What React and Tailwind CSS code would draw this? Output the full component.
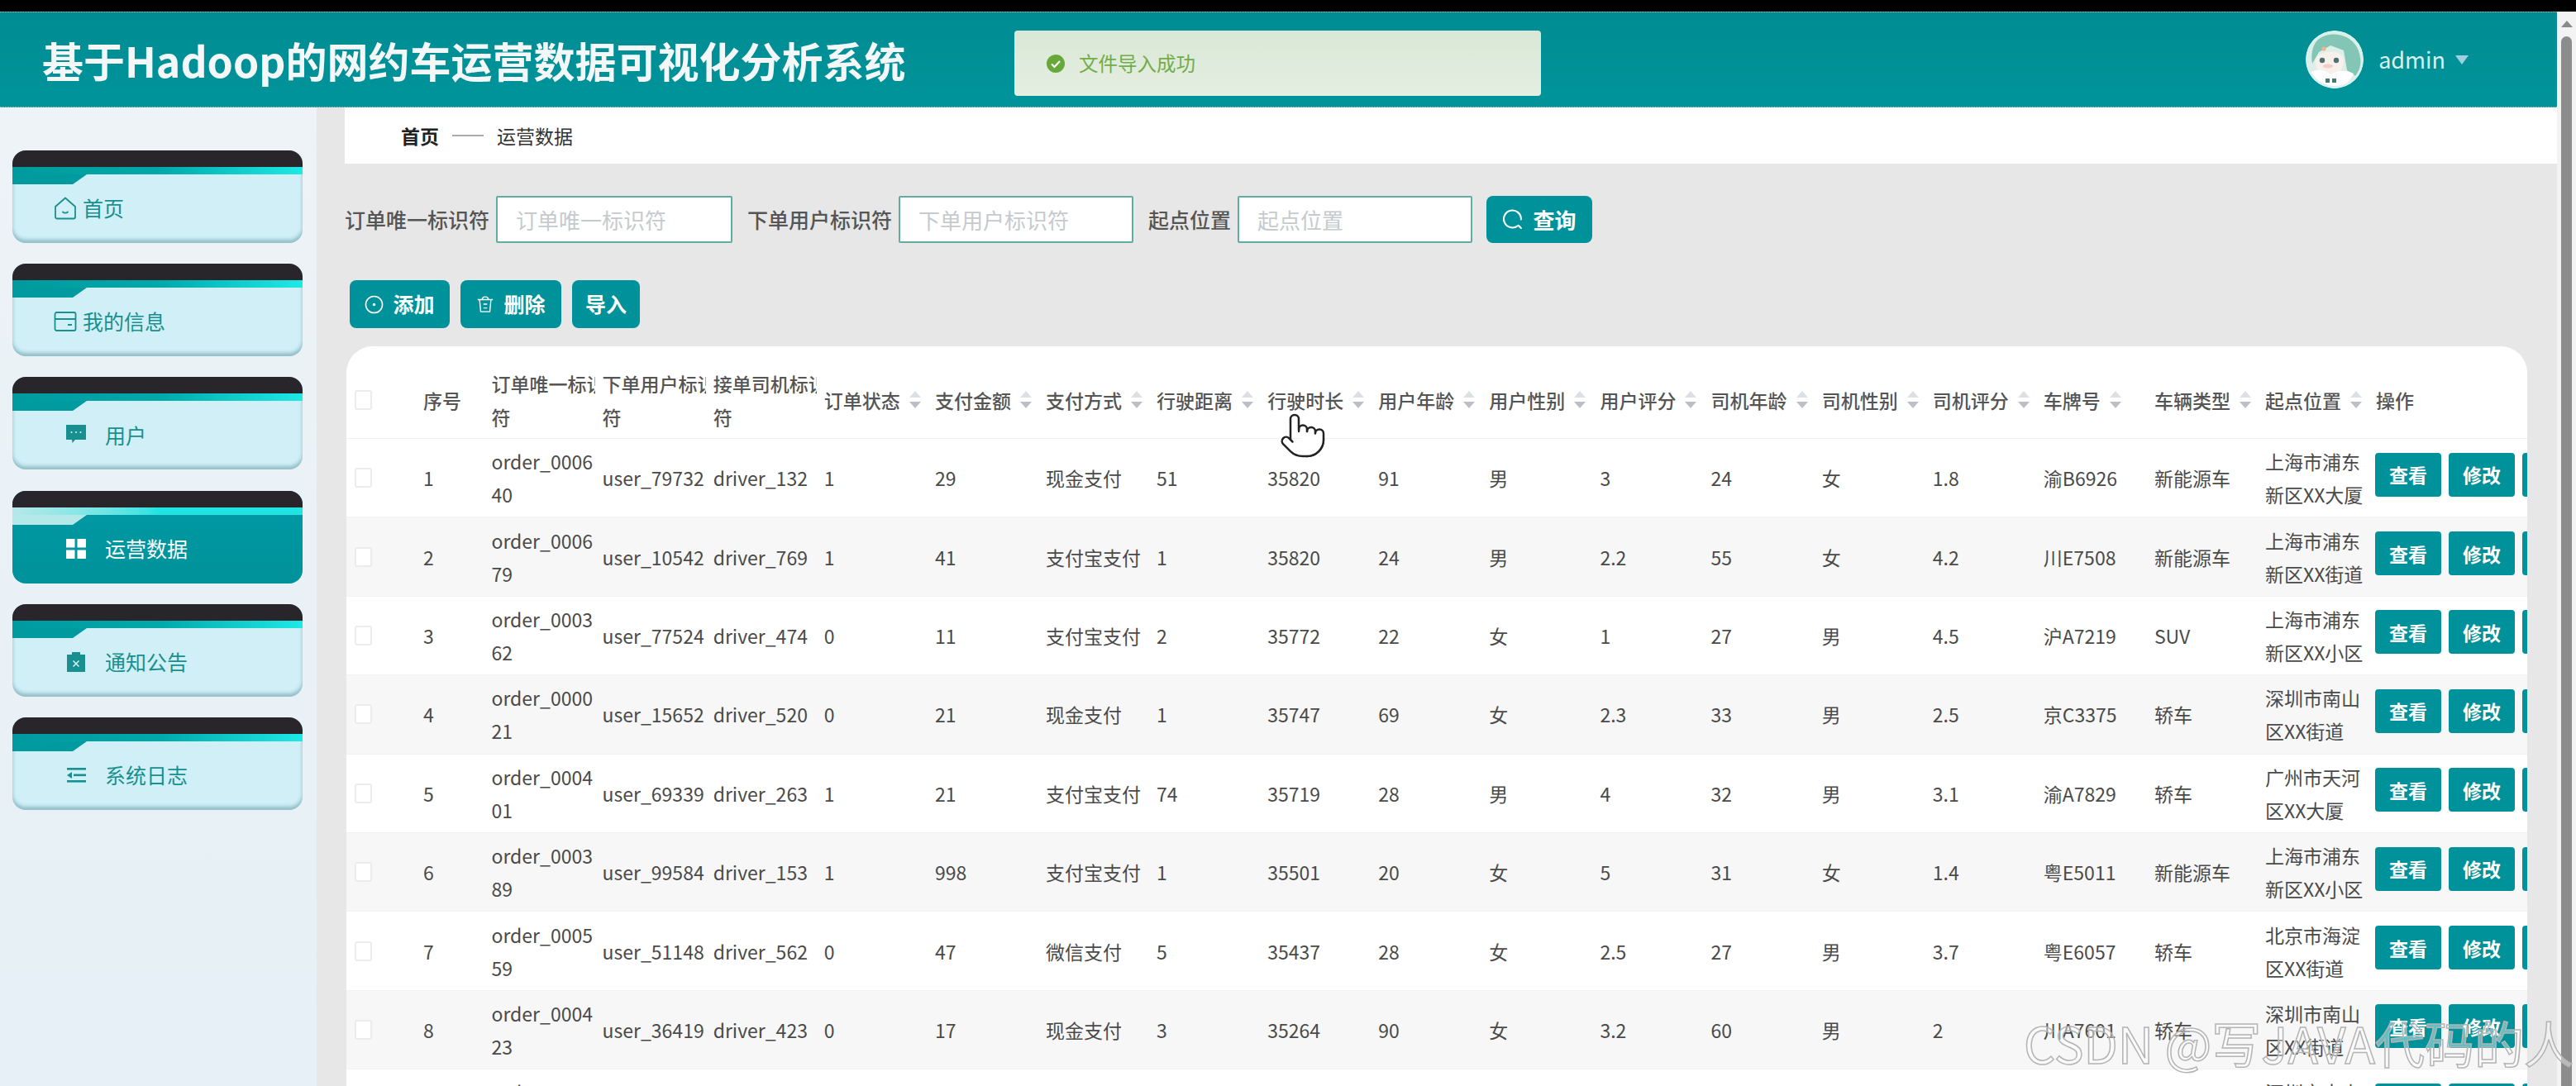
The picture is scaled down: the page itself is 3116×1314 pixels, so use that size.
import { Pointer } from 'lucide-react'

const rows = [
  [1, ['order_0006', '40'], 'user_79732', 'driver_132', 1, 29, '现金支付', 51, 35820, 91, '男', 3, 24, '女', 1.8, '渝B6926', '新能源车', ['上海市浦东', '新区XX大厦']],
  [2, ['order_0006', '79'], 'user_10542', 'driver_769', 1, 41, '支付宝支付', 1, 35820, 24, '男', 2.2, 55, '女', 4.2, '川E7508', '新能源车', ['上海市浦东', '新区XX街道']],
  [3, ['order_0003', '62'], 'user_77524', 'driver_474', 0, 11, '支付宝支付', 2, 35772, 22, '女', 1, 27, '男', 4.5, '沪A7219', 'SUV', ['上海市浦东', '新区XX小区']],
  [4, ['order_0000', '21'], 'user_15652', 'driver_520', 0, 21, '现金支付', 1, 35747, 69, '女', 2.3, 33, '男', 2.5, '京C3375', '轿车', ['深圳市南山', '区XX街道']],
  [5, ['order_0004', '01'], 'user_69339', 'driver_263', 1, 21, '支付宝支付', 74, 35719, 28, '男', 4, 32, '男', 3.1, '渝A7829', '轿车', ['广州市天河', '区XX大厦']],
  [6, ['order_0003', '89'], 'user_99584', 'driver_153', 1, 998, '支付宝支付', 1, 35501, 20, '女', 5, 31, '女', 1.4, '粤E5011', '新能源车', ['上海市浦东', '新区XX小区']],
  [7, ['order_0005', '59'], 'user_51148', 'driver_562', 0, 47, '微信支付', 5, 35437, 28, '女', 2.5, 27, '男', 3.7, '粤E6057', '轿车', ['北京市海淀', '区XX街道']],
  [8, ['order_0004', '23'], 'user_36419', 'driver_423', 0, 17, '现金支付', 3, 35264, 90, '女', 3.2, 60, '男', 2, '川A7601', '轿车', ['深圳市南山', '区XX街道']],
  [9, ['order_0003', '12'], 'user_40218', 'driver_377', 1, 36, '微信支付', 8, 35190, 41, '男', 3.6, 29, '女', 4.1, '京A3052', '轿车', ['深圳市南山', '区XX小区']],
]

const headers = [
  { lines: ['订单唯一标识', '符'] },
  { lines: ['下单用户标识', '符'] },
  { lines: ['接单司机标识', '符'] },
  { text: '订单状态', sort: true },
  { text: '支付金额', sort: true },
  { text: '支付方式', sort: true },
  { text: '行驶距离', sort: true },
  { text: '行驶时长', sort: true },
  { text: '用户年龄', sort: true },
  { text: '用户性别', sort: true },
  { text: '用户评分', sort: true },
  { text: '司机年龄', sort: true },
  { text: '司机性别', sort: true },
  { text: '司机评分', sort: true },
  { text: '车牌号', sort: true },
  { text: '车辆类型', sort: true },
  { text: '起点位置', sort: true },
]

const gridCols = 'grid grid-cols-[88px_82.5px_repeat(17,134.1px)_188px] items-center'

const HomeIcon = () => (
  <svg viewBox="0 0 28 28" className="w-[28px] h-[28px]" fill="none" stroke="currentColor" strokeWidth="1.8">
    <path d="M2 12 14 1.5 26 12v12.5a2 2 0 0 1-2 2H4a2 2 0 0 1-2-2z" strokeLinejoin="round" />
    <path d="M11 18.5c1.5 1.5 4.5 1.5 6 0" strokeLinecap="round" />
  </svg>
)

const CardIcon = () => (
  <svg viewBox="0 0 28 28" className="w-[28px] h-[28px]" fill="none" stroke="currentColor" strokeWidth="1.8">
    <rect x="1.5" y="3" width="25" height="22" rx="2" />
    <path d="M1.5 11h25M17 18h5" />
  </svg>
)

const ChatIcon = () => (
  <svg viewBox="0 0 24 24" className="w-[24px] h-[24px]" fill="currentColor">
    <path d="M0 0h24v18H11l-3.5 4-.5-4H0z" />
    <circle cx="6.5" cy="9" r="1.1" fill="#d0eff6" />
    <circle cx="12" cy="9" r="1.1" fill="#d0eff6" />
    <circle cx="17.5" cy="9" r="1.1" fill="#d0eff6" />
  </svg>
)

const GridIcon = () => (
  <svg viewBox="0 0 24 24" className="w-[24px] h-[24px]" fill="currentColor">
    <rect x="0" y="0" width="10.5" height="10.5" />
    <rect x="13.5" y="0" width="10.5" height="10.5" />
    <rect x="0" y="13.5" width="10.5" height="10.5" />
    <rect x="13.5" y="13.5" width="10.5" height="10.5" />
  </svg>
)

const ClipIcon = () => (
  <svg viewBox="0 0 24 24" className="w-[24px] h-[24px]" fill="currentColor">
    <path d="M1 3h6V0h10v3h6v21H1z" />
    <path d="m8.5 10.5 7 7m0-7-7 7" stroke="#d0eff6" strokeWidth="1.6" />
  </svg>
)

const FoldIcon = () => (
  <svg viewBox="0 0 24 24" className="w-[24px] h-[24px]" fill="currentColor">
    <rect x="1" y="3" width="23" height="2.6" />
    <rect x="9" y="10.5" width="15" height="2.6" />
    <rect x="1" y="18" width="23" height="2.6" />
    <path d="M7 8v8l-6-4z" />
  </svg>
)

const CircleIcon = () => (
  <svg viewBox="0 0 24 24" className="w-[23px] h-[23px]" fill="none" stroke="currentColor" strokeWidth="1.6">
    <circle cx="12" cy="12" r="10.5" />
    <circle cx="12" cy="12" r="1.8" fill="currentColor" stroke="none" />
  </svg>
)

const TrashIcon = () => (
  <svg viewBox="0 0 24 24" className="w-[22px] h-[22px]" fill="none" stroke="currentColor" strokeWidth="1.5">
    <path d="M2 6h20M8 6c0-5 8-5 8 0M4.5 6l1.5 16h12l1.5-16M9.5 12h5M9.5 17h5" />
  </svg>
)

const SearchIcon = () => (
  <svg viewBox="0 0 24 24" className="w-[25px] h-[25px]" fill="none" stroke="currentColor" strokeWidth="2" strokeLinecap="round">
    <path d="M17 19.5A10 10 0 1 1 21 12" />
    <path d="m18 19 3 3" />
  </svg>
)

const Avatar = () => (
  <svg viewBox="0 0 70 70" className="w-[70px] h-[70px] rounded-full">
    <circle cx="35" cy="35" r="35" fill="#dcefe8" />
    <path d="M14 12C26 0 52 2 62 20c6 12 6 26 0 36L50 48 46 24 30 18 16 26 8 40C6 30 8 18 14 12z" fill="#84c6b6" />
    <path d="M12 34c4-10 28-12 33-2 3 8 0 16-8 20H22C14 50 10 42 12 34z" fill="#f8f0ea" />
    <circle cx="20" cy="36" r="3.2" fill="#4f6f72" />
    <circle cx="37" cy="36" r="3.2" fill="#4f6f72" />
    <ellipse cx="27" cy="43" rx="6" ry="2.6" fill="#f4cdc8" />
    <path d="M6 50c10-4 18-2 24 3 8-5 18-6 28-1-6 12-14 18-23 18S12 62 6 50z" fill="#fff" />
    <path d="M24 58h5v5h-5zM32 58h5v5h-5z" fill="#3f7d6e" />
    <circle cx="22" cy="22" r="2.6" fill="#f0b48a" />
    <circle cx="35" cy="35" r="33.5" fill="none" stroke="#d8f1ee" strokeWidth="3" />
  </svg>
)

const menu = [
  { label: '首页', Icon: HomeIcon, wide: true },
  { label: '我的信息', Icon: CardIcon, wide: true },
  { label: '用户', Icon: ChatIcon },
  { label: '运营数据', Icon: GridIcon, active: true },
  { label: '通知公告', Icon: ClipIcon },
  { label: '系统日志', Icon: FoldIcon },
]

const MenuItem = ({ label, Icon, wide, active }) => (
  <div className={`flex flex-col h-[112px] rounded-[16px] overflow-hidden ${active ? 'bg-gradient-to-b from-[#009aa6] to-[#00929a]' : 'bg-[#d0eff6] shadow-[inset_0_-4px_4px_rgba(70,130,145,0.45)]'}`}>
    <div className="h-[20px] bg-[#28252b]"></div>
    <div className={`h-[9px] bg-gradient-to-r ${active ? 'from-[#b5e8e8] via-[#20e3e3] to-[#20e3e3]' : 'from-[#009a9f] via-[#00a8aa] to-[#1de9e6]'}`}></div>
    <div className="relative flex-1 flex items-center">
      <svg viewBox="0 0 90 12" className="absolute left-0 top-0 w-[90px] h-[12px]">
        <polygon points="0,0 90,0 73,12 0,12" fill={active ? '#b5e8e8' : '#009a9f'} />
      </svg>
      <div className={`flex items-center text-[25px] -mt-[1px] ${wide ? 'pl-[50px] gap-[7px]' : 'pl-[65px] gap-[23px]'} ${active ? 'text-white' : 'text-[#17908f]'}`}>
        <Icon />
        <span>{label}</span>
      </div>
    </div>
  </div>
)

const SortCaret = () => (
  <span className="flex flex-col items-center gap-[5px] ml-[11px]">
    <span className="w-0 h-0 border-x-[7px] border-x-transparent border-b-[8px] border-b-[#dcdfe3]"></span>
    <span className="w-0 h-0 border-x-[7px] border-x-transparent border-t-[8px] border-t-[#bcc0c6]"></span>
  </span>
)

const Checkbox = () => (
  <div className="ml-[10px] w-[21px] h-[24px] rounded-[3px] bg-white border-2 border-[#ececec]"></div>
)

const Cell = ({ value }) => (
  <div className="pl-[5px] overflow-hidden whitespace-nowrap">
    {Array.isArray(value) ? value.map((line) => <div key={line}>{line}</div>) : value}
  </div>
)

const SearchField = ({ label, w, gap }) => (
  <div className={`flex items-center gap-[8px] ${gap}`}>
    <span className="text-[25px] font-medium text-[#555]">{label}</span>
    <input
      placeholder={label}
      className={`${w} h-[57px] px-[22px] bg-white border-2 border-[#5fae9f] rounded-[2px] text-[26px] placeholder:text-[#c6cacd] outline-none`}
    />
  </div>
)

const App = () => {
  return (
    <div className="relative w-[3116px] h-[1314px] overflow-hidden bg-black font-['Noto_Sans_CJK_SC','Noto_Sans',sans-serif]">
      <div className="h-[14px]"></div>
      <div className="flex h-[1300px]">
        <div className="w-[3093px] flex flex-col">
          <header className="relative h-[116px] shrink-0 flex items-center justify-between pl-[51px] pr-[107px] bg-gradient-to-b from-[#008c92] to-[#00949b] border-y border-dotted border-[#8fd0d0]">
            <h1 className="text-[50px] font-bold text-[#f4f7f7]">基于Hadoop的网约车运营数据可视化分析系统</h1>
            <div className="flex items-center">
              <Avatar />
              <span className="ml-[18px] text-[27px] text-[#d5f3f3]">admin</span>
              <span className="ml-[12px] w-0 h-0 border-x-[8px] border-x-transparent border-t-[11px] border-t-[#9fd0de]"></span>
            </div>
            <div className="absolute left-[1227px] top-[22px] w-[637px] h-[79px] flex items-center gap-[16px] pl-[38px] rounded-[4px] bg-gradient-to-b from-[#d9e7d6] to-[#e5efe1]">
              <svg viewBox="0 0 24 24" className="w-[24px] h-[24px]">
                <circle cx="12" cy="12" r="11" fill="#67a83a" />
                <path d="m7 12.5 3.5 3.5L17 9" fill="none" stroke="#fff" strokeWidth="2.2" />
              </svg>
              <span className="text-[23.5px] text-[#73ad48]">文件导入成功</span>
            </div>
          </header>

          <div className="flex flex-1 min-h-0">
            <aside className="w-[383px] shrink-0 pl-[15px] pr-[17px] pt-[52px] flex flex-col gap-[25.2px] bg-gradient-to-b from-[#edf3f6] to-[#e6f0f6]">
              {menu.map((item) => (
                <MenuItem key={item.label} {...item} />
              ))}
            </aside>

            <main className="flex-1 min-w-0 pl-[34px] bg-[#e6e7e6]">
              <div className="h-[68px] flex items-center pl-[68px] bg-white text-[23px] text-[#333]">
                <span className="font-bold text-[#222]">首页</span>
                <span className="mx-[16px] w-[38px] h-[2px] bg-[#aaa]"></span>
                <span>运营数据</span>
              </div>

              <div className="flex items-center mt-[39px]">
                <SearchField label="订单唯一标识符" w="w-[286px]" />
                <SearchField label="下单用户标识符" w="w-[284px]" gap="ml-[18px]" />
                <SearchField label="起点位置" w="w-[284px]" gap="ml-[18px]" />
                <button className="ml-[17px] w-[128px] h-[57px] flex items-center justify-center gap-[12px] rounded-[8px] bg-[#00929a] text-white text-[26px] font-bold">
                  <SearchIcon />
                  查询
                </button>
              </div>

              <div className="flex items-center gap-[13px] mt-[45px] pl-[6px] text-[25px] font-bold text-white">
                <button className="w-[121px] h-[58px] flex items-center justify-center gap-[11px] rounded-[8px] bg-[#00929a]">
                  <CircleIcon />
                  添加
                </button>
                <button className="w-[122px] h-[58px] flex items-center justify-center gap-[11px] rounded-[8px] bg-[#00929a]">
                  <TrashIcon />
                  删除
                </button>
                <button className="w-[82px] h-[58px] rounded-[8px] bg-[#00929a]">导入</button>
              </div>

              <div className="ml-[2px] mr-[36px] mt-[22px] h-[900px] pt-[18px] overflow-hidden rounded-t-[32px] bg-white text-[23px] leading-[40px] text-[#4a4a4a]">
                <div className={`${gridCols} h-[94px] font-medium text-[#555] border-b border-[#f0f0f0]`}>
                  <Checkbox />
                  <div className="pl-[5px]">序号</div>
                  {headers.map((h) =>
                    h.lines ? (
                      <div key={h.lines[0]} className="ml-[5px] w-[125px] overflow-hidden whitespace-nowrap">
                        {h.lines.map((line) => <div key={line}>{line}</div>)}
                      </div>
                    ) : (
                      <div key={h.text} className="pl-[5px] flex items-center">
                        {h.text}
                        {h.sort && <SortCaret />}
                      </div>
                    )
                  )}
                  <div className="pl-[5px]">操作</div>
                </div>

                {rows.map((row, i) => (
                  <div key={row[0]} className={`${gridCols} h-[95.4px] border-b border-[#f2f2f2] ${i % 2 === 1 ? 'bg-[#f7f7f7]' : 'bg-white'}`}>
                    <Checkbox />
                    {row.map((value, j) => (
                      <Cell key={j} value={value} />
                    ))}
                    <div className="flex gap-[9px] pl-[4px] -mt-[8px] overflow-hidden text-white font-bold">
                      <button className="shrink-0 w-[80px] h-[53px] rounded-[4px] bg-[#00929a]">查看</button>
                      <button className="shrink-0 w-[80px] h-[53px] rounded-[4px] bg-[#00929a]">修改</button>
                      <button className="shrink-0 w-[80px] h-[53px] rounded-[4px] bg-[#00929a]">删除</button>
                    </div>
                  </div>
                ))}
              </div>
            </main>
          </div>
        </div>

        <div className="w-[23px] bg-[#f3f3f3] flex flex-col items-center pt-[11px]">
          <span className="w-0 h-0 border-x-[7px] border-x-transparent border-b-[8px] border-b-[#8a8a8a]"></span>
          <div className="mt-[11px] flex-1 w-[13px] rounded-t-full bg-[#8c8c8c]"></div>
        </div>
      </div>

      <Pointer className="absolute left-[1546px] top-[497px] w-[60px] h-[60px] text-[#222] fill-white" strokeWidth={1} />
      <div className="absolute left-[2448px] top-[1228px] text-[60px] leading-[66px] whitespace-nowrap text-white/40 [-webkit-text-stroke:1.5px_#b4b4b4]">
        CSDN @写JAVA代码的人
      </div>
    </div>
  )
}

export default App
